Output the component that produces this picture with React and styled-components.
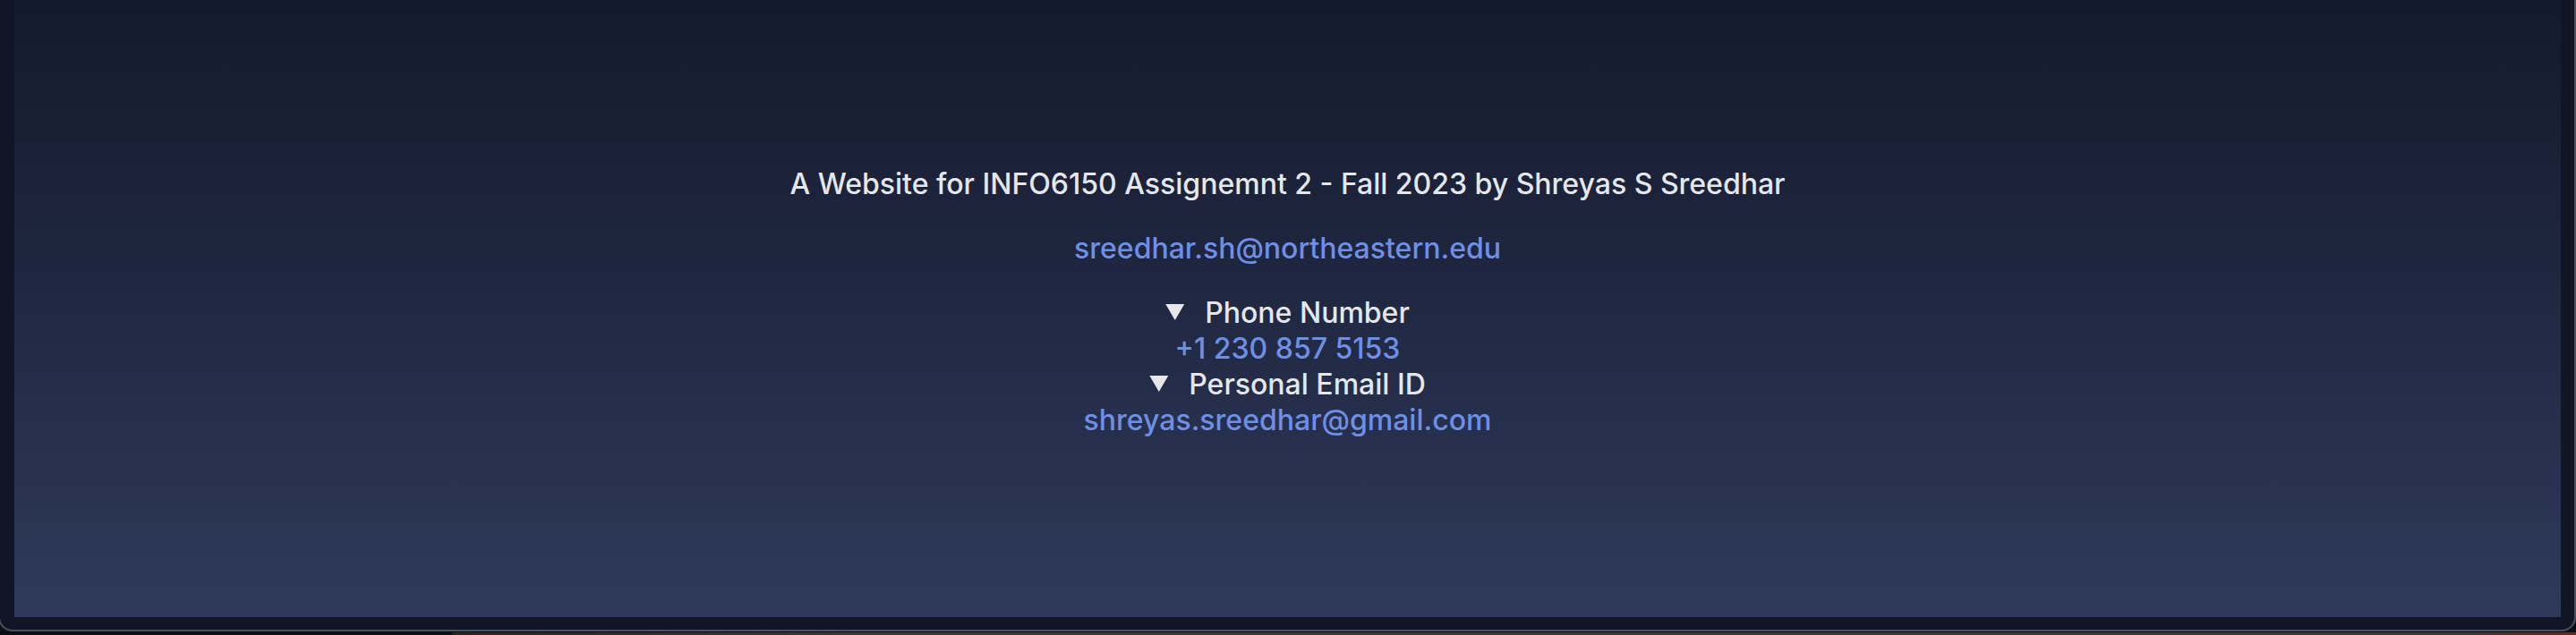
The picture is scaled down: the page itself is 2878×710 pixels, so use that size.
import React from "react";
import styled, { createGlobalStyle } from "styled-components";

const Global = createGlobalStyle`
  html, body {
    margin: 0;
    padding: 0;
    background: #0b0e14;
    overflow: hidden;
  }
  body {
    font-family: Inter, "Noto Sans", sans-serif;
  }
`;

const Page = styled.div`
  width: 2878px;
  height: 710px;
  overflow: hidden;
  display: flex;
  flex-direction: column;
`;

const Frame = styled.div`
  margin-left: -2px;
  width: 2880px;
  box-sizing: border-box;
  background: #111627;
  border: 2px solid #4b505d;
  border-top: none;
  border-radius: 0 0 16px 16px;
  padding: 0 15px 14px 16px;
`;

const Footer = styled.footer`
  height: 690px;
  box-sizing: border-box;
  padding-top: 186px;
  background: linear-gradient(to bottom, #141a2d 0%, #1f2740 45%, #2f3a5b 100%);
  color: #e5e7eb;
  text-align: center;
  font-size: 32px;
  line-height: 40px;
  font-weight: 500;
`;

const Title = styled.p`
  margin: 0;
`;

const Contact = styled.div``;

const MailLine = styled.p`
  margin: 32px 0;
`;

const Link = styled.a`
  color: #6f8fe6;
  text-decoration: none;
`;

const Details = styled.details`
  margin: 0;
`;

const Summary = styled.summary`
  color: #e5e7eb;
  cursor: pointer;
  list-style: none;

  &::-webkit-details-marker {
    display: none;
  }

  &::before {
    content: "";
    display: inline-block;
    width: 21px;
    height: 18px;
    margin: 0 23px 3px 0;
    background: #e5e7eb;
    clip-path: polygon(0 0, 100% 0, 50% 100%);
  }
`;

const Strip = styled.div`
  height: 4px;
  display: flex;
  align-items: flex-end;
`;

const StripBand = styled.div`
  margin-left: ${(p) => p.$left}px;
  flex: 1;
  height: 3px;
  background: linear-gradient(to right, #2a2424 0%, #3b3838 20%, #3a3838 95%, #6a2818 100%);
`;

const entries = [
  { label: "Phone Number", value: "+1 230 857 5153", href: "tel:+12308575153" },
  {
    label: "Personal Email ID",
    value: "shreyas.sreedhar@gmail.com",
    href: "mailto:shreyas.sreedhar@gmail.com",
  },
];

export default function App() {
  return (
    <Page>
      <Global />
      <Frame>
        <Footer>
          <Title>A Website for INFO6150 Assignemnt 2 - Fall 2023 by Shreyas S Sreedhar</Title>
          <Contact>
            <MailLine>
              <Link href="mailto:sreedhar.sh@northeastern.edu">sreedhar.sh@northeastern.edu</Link>
            </MailLine>
            {entries.map((e) => (
              <Details key={e.label} open>
                <Summary>{e.label}</Summary>
                <Link href={e.href}>{e.value}</Link>
              </Details>
            ))}
          </Contact>
        </Footer>
      </Frame>
      <Strip>
        <StripBand $left={505} />
      </Strip>
    </Page>
  );
}
